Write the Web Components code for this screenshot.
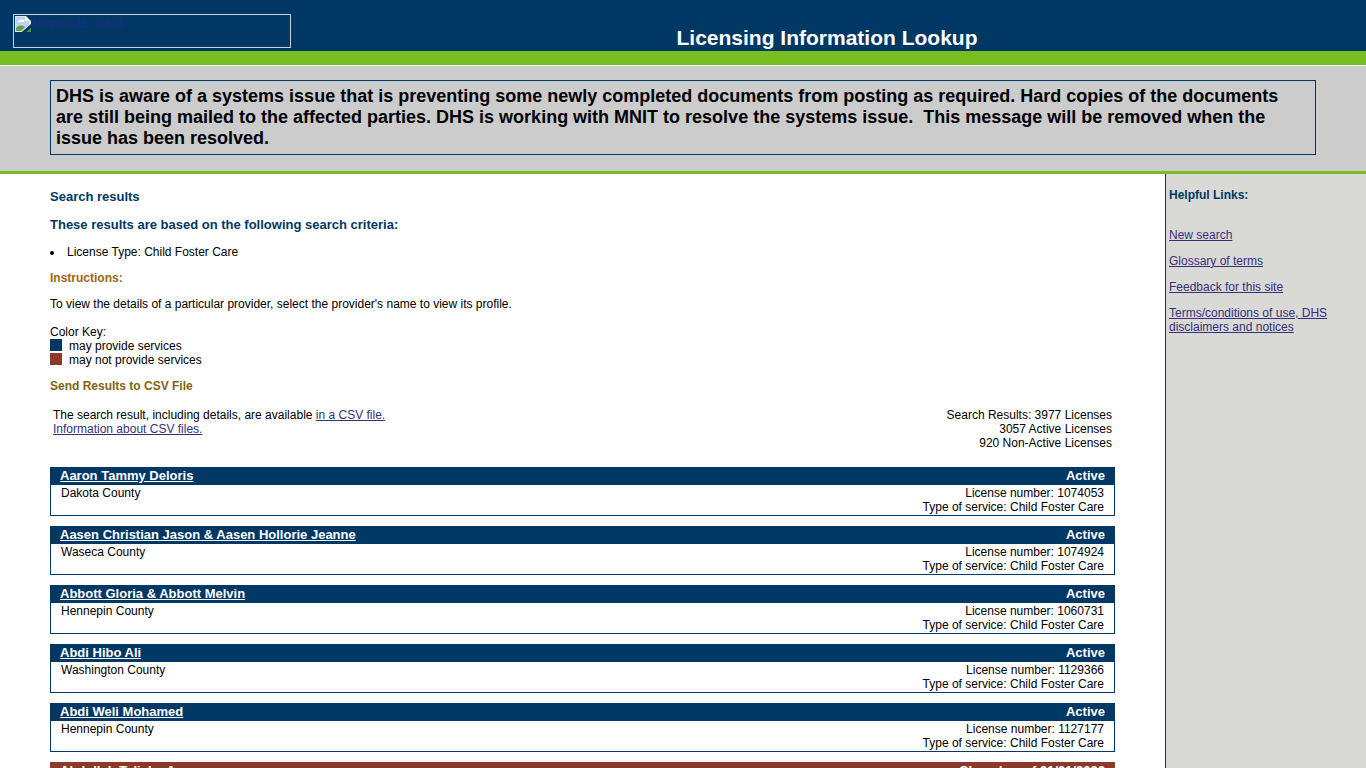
<!DOCTYPE html>
<html lang="en">
<head>
<meta charset="utf-8">
<title>Licensing Information Lookup</title>
<style>
  html { scrollbar-width: none; }
  body { margin: 0; background: #fff; color: #000; font: 12px/14px "Liberation Sans", Arial, sans-serif;
    --navy: #003865; --green: #78be21; --link: #35307c; --closed: #8b3a29; }
</style>
</head>
<body>
<lookup-page></lookup-page>

<template id="page-tpl">
  <style>
    :host { display: flex; flex-direction: column; min-height: 100vh; }
    .columns { flex: 1; display: grid; grid-template-columns: minmax(0, 1fr) 201px; }
    main { padding: 16px 50px 0; }
    h1, h2, h3, p, ul { margin: 0; }
    h1, h2 { font-size: 13px; line-height: 14px; color: var(--navy); }
    h1 { margin-bottom: 14px; }
    h2 { margin-bottom: 13px; }
    h3 { font-size: 12px; line-height: 14px; color: #a0651a; margin: 12px 0; }
    h3.csv { color: #80640f; }
    ul.criteria { padding-left: 17px; list-style: none; }
    ul.criteria li { position: relative; }
    ul.criteria li::before { content: ""; position: absolute; left: -17px; top: 6px; width: 4px; height: 4px; border-radius: 50%; background: #000; }
    .key { margin-top: 14px; }
    .summary { display: flex; justify-content: space-between; padding: 3px; margin: 0 0 14px; }
    .summary .totals { text-align: right; }
    a { color: var(--link); }
    .results { display: grid; gap: 10px; }
  </style>
  <site-header></site-header>
  <notice-banner>DHS is aware of a systems issue that is preventing some newly completed documents from posting as required. Hard copies of the documents are still being mailed to the affected parties. DHS is working with MNIT to resolve the systems issue.&nbsp; This message will be removed when the issue has been resolved.</notice-banner>
  <div class="columns">
    <main>
      <h1>Search results</h1>
      <h2>These results are based on the following search criteria:</h2>
      <ul class="criteria"><li>License Type: Child Foster Care</li></ul>
      <h3>Instructions:</h3>
      <p>To view the details of a particular provider, select the provider's name to view its profile.</p>
      <div class="key">
        <div>Color Key:</div>
        <key-entry>may provide services</key-entry>
        <key-entry closed>may not provide services</key-entry>
      </div>
      <h3 class="csv">Send Results to CSV File</h3>
      <div class="summary">
        <div>The search result, including details, are available <a href="#csv">in a CSV file.</a><br><a href="#about-csv">Information about CSV files.</a></div>
        <div class="totals">Search Results: 3977 Licenses<br>3057 Active Licenses<br>920 Non-Active Licenses</div>
      </div>
      <div class="results">
        <license-card name="Aaron Tammy Deloris" status="Active" county="Dakota County" number="1074053"></license-card>
        <license-card name="Aasen Christian Jason &amp; Aasen Hollorie Jeanne" status="Active" county="Waseca County" number="1074924"></license-card>
        <license-card name="Abbott Gloria &amp; Abbott Melvin" status="Active" county="Hennepin County" number="1060731"></license-card>
        <license-card name="Abdi Hibo Ali" status="Active" county="Washington County" number="1129366"></license-card>
        <license-card name="Abdi Weli Mohamed" status="Active" county="Hennepin County" number="1127177"></license-card>
        <license-card closed name="Abdullah Talisha A" status="Closed as of 01/01/2026"></license-card>
      </div>
    </main>
    <helpful-links></helpful-links>
  </div>
</template>

<template id="header-tpl">
  <style>
    :host { display: flex; align-items: flex-end; background: var(--navy); border-bottom: 14px solid var(--green); padding: 14px 13px 3px; }
    a { box-sizing: border-box; flex: none; display: flex; gap: 1px; width: 278px; height: 34px; border: 1px solid #c3d3e0; padding: 1px; color: #1c2c86; text-decoration: none; }
    svg { flex: none; width: 16px; height: 16px; }
    .title { flex: 1; padding-left: 10px; text-align: center; color: #fff; font-weight: bold; font-size: 21px; line-height: 20px; }
  </style>
  <a href="#home">
    <svg viewBox="0 0 16 16" aria-hidden="true">
      <path d="M0 0H11L16 5V9L7 16H0Z" fill="#dfe8ee"/>
      <path d="M1 1H10L14 5V9L7 15H1Z" fill="#bcd4ee"/>
      <path d="M3 6Q3 4 5 4Q6 2 8 4Q10 4 9 6Z" fill="#fff"/>
      <path d="M1 15V12Q5 7 10 11L6 15Z" fill="#5fa04e"/>
      <path d="M10 0V5H15Z" fill="#fff"/>
      <path d="M7 16L16 8V11L11 16Z" fill="#003865"/>
      <path d="M11 16L16 12V16Z" fill="#4c9140"/>
    </svg>
    <span>Minnesota - DHS</span>
  </a>
  <div class="title">Licensing Information Lookup</div>
</template>

<template id="banner-tpl">
  <style>
    :host { display: block; margin-top: 1px; background: #ccc; border-bottom: 3px solid var(--green); padding: 14px 50px 16px; }
    .box { border: 1px solid var(--navy); padding: 5px; font-weight: bold; font-size: 18px; line-height: 21px; }
  </style>
  <div class="box" role="note"><slot></slot></div>
</template>

<template id="key-tpl">
  <style>
    :host { display: flex; gap: 7px; --swatch: var(--navy); }
    :host([closed]) { --swatch: var(--closed); }
    i { width: 12px; height: 12px; background: var(--swatch); }
  </style>
  <i></i><span><slot></slot></span>
</template>

<template id="links-tpl">
  <style>
    :host { display: block; background: #d9d9d6; border-left: 1px solid var(--navy); padding: 14px 3px; }
    h2 { margin: 0 0 26px; font-size: 12px; line-height: 14px; color: var(--navy); }
    nav { display: grid; gap: 12px; justify-items: start; }
    a { color: var(--link); }
  </style>
  <h2>Helpful Links:</h2>
  <nav aria-label="Helpful links">
    <a href="#search">New search</a>
    <a href="#glossary">Glossary of terms</a>
    <a href="#feedback">Feedback for this site</a>
    <a href="#terms">Terms/conditions of use, DHS disclaimers and notices</a>
  </nav>
</template>

<template id="card-tpl">
  <style>
    :host { display: block; border: 1px solid var(--tone); --tone: var(--navy); }
    :host([closed]) { --tone: var(--closed); }
    .row { display: flex; justify-content: space-between; }
    .head { background: var(--tone); color: #fff; font-weight: bold; font-size: 13px; line-height: 16px; padding: 0 9px 1px; }
    a { color: #fff; }
    .body { padding: 1px 10px; }
    .facts { text-align: right; }
  </style>
  <div class="row head"><a href="#profile"></a><span class="status"></span></div>
  <div class="row body"><span class="county"></span><div class="facts"></div></div>
</template>

<script>
  class TemplateElement extends HTMLElement {
    constructor() {
      super();
      const tpl = document.getElementById(this.constructor.template);
      this.attachShadow({ mode: "open" }).append(tpl.content.cloneNode(true));
    }
  }
  customElements.define("site-header", class extends TemplateElement { static template = "header-tpl"; });
  customElements.define("notice-banner", class extends TemplateElement { static template = "banner-tpl"; });
  customElements.define("key-entry", class extends TemplateElement { static template = "key-tpl"; });
  customElements.define("helpful-links", class extends TemplateElement { static template = "links-tpl"; });
  customElements.define("license-card", class extends TemplateElement {
    static template = "card-tpl";
    connectedCallback() {
      const get = (name) => this.getAttribute(name) || "";
      const find = (selector) => this.shadowRoot.querySelector(selector);
      find("a").textContent = get("name");
      find(".status").textContent = get("status");
      if (!get("number")) { find(".body").remove(); return; }
      find(".county").textContent = get("county");
      find(".facts").append("License number: " + get("number"), document.createElement("br"), "Type of service: Child Foster Care");
    }
  });
  customElements.define("lookup-page", class extends TemplateElement { static template = "page-tpl"; });
</script>
</body>
</html>
